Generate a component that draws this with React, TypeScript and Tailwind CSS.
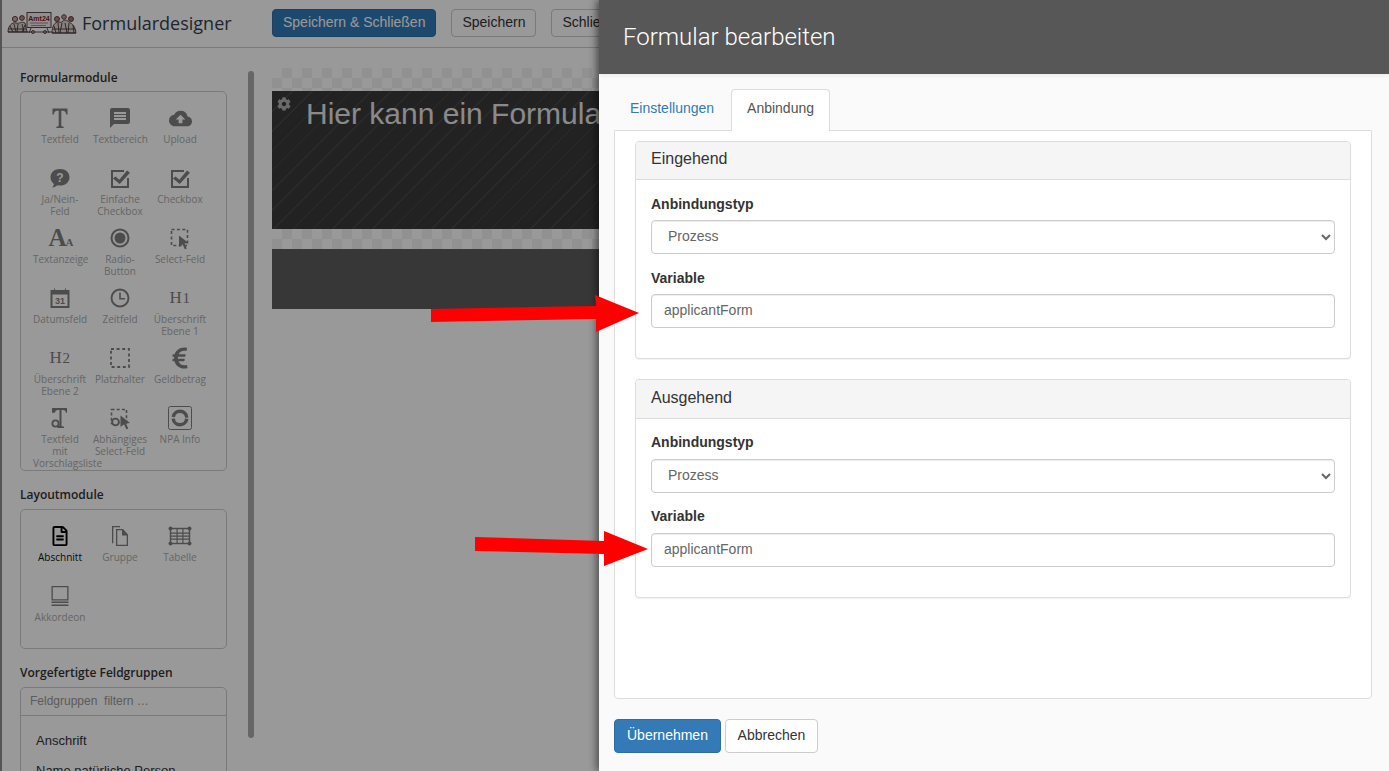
import React from "react";
import { FaEuroSign, FaCog, FaRegFileAlt } from "react-icons/fa";
import { MdMessage, MdCloudUpload } from "react-icons/md";

const sans = "font-['Liberation_Sans',Arial,sans-serif]";
const open = "font-['Open_Sans','Noto_Sans',sans-serif]";

function SvgI({ children, w = 24, h = 24, vb }: { children: React.ReactNode; w?: number; h?: number; vb?: string }) {
  return (
    <svg width={w} height={h} viewBox={vb ?? `0 0 ${w} ${h}`} fill="currentColor">
      {children}
    </svg>
  );
}

const BigT = () => (
  <SvgI>
    <path d="M4.500 2.500h15v6h-1.300c-.4-2.400-1.300-3.700-3.700-3.700h-1.200v14.200c0 1.300.6 1.600 2.400 1.700v1.300H8.300v-1.300c1.800-.1 2.400-.4 2.400-1.700V4.800H9.500c-2.400 0-3.300 1.300-3.700 3.700H4.500z" />
  </SvgI>
);
const QBubble = () => (
  <SvgI>
    <path d="M12 3c5.500 0 9.500 3.400 9.500 8.300S17.500 19.600 12 19.600c-.9 0-1.800-.1-2.600-.3-1.300 1.200-3 2-5.400 2.300 1-1 1.700-2.200 1.900-3.700C3.800 16.400 2.500 14 2.500 11.300 2.500 6.400 6.500 3 12 3z" />
    <text x="12" y="16" textAnchor="middle" fontSize="12" fontWeight="700" fill="#fff" fontFamily="Liberation Sans">?</text>
  </SvgI>
);
const Check = () => (
  <SvgI>
    <path d="M3 4h13v2H5v14h14v-8h2v10H3z" />
    <path d="M7.500 10.500l3.800 3.300L19 4.500l3 2.300-10.300 11.200L5 12.600z" />
  </SvgI>
);
const Aa = () => (
  <span className="flex items-end pl-[2px] font-['Liberation_Serif',serif] font-bold leading-none h-[22px]">
    <span className="text-[25px] leading-[22px]">A</span>
    <span className="text-[11px] leading-[14px] -ml-[1px]">A</span>
  </span>
);
const Radio = () => (
  <SvgI>
    <circle cx="12" cy="12" r="8.500" fill="none" stroke="currentColor" strokeWidth="2" />
    <circle cx="12" cy="12" r="5.500" />
  </SvgI>
);
const Cursor = ({ x, y, s = 1 }: { x: number; y: number; s?: number }) => (
  <path transform={`translate(${x} ${y}) scale(${s})`} d="M0 0l9.500 7.500-4 .4 2.300 5-2 .9-2.200-5.100L0 11.500z" />
);
const SelectI = () => (
  <SvgI>
    <rect x="3.500" y="3.500" width="16" height="16" fill="none" stroke="currentColor" strokeWidth="1.600" strokeDasharray="3 2.400" />
    <Cursor x={11} y={9.500} />
  </SvgI>
);
const DepI = () => (
  <SvgI>
    <rect x="3.500" y="3.500" width="15" height="14" fill="none" stroke="currentColor" strokeWidth="1.600" strokeDasharray="3 2.200" />
    <Cursor x={12.500} y={9.500} />
    <circle cx="7.500" cy="16" r="3.400" fill="#fff" stroke="currentColor" strokeWidth="1.900" />
  </SvgI>
);
const Cal = () => (
  <SvgI>
    <path fillRule="evenodd" d="M2.500 4H6V2.500h1V4h10V2.500h1V4h3.500v18h-19zM4.500 8.500V20h15V8.500z" />
    <text x="12" y="18.300" textAnchor="middle" fontSize="9" fontWeight="700" fontFamily="Liberation Sans">31</text>
  </SvgI>
);
const Clock = () => (
  <SvgI>
    <circle cx="12" cy="12" r="8.500" fill="none" stroke="currentColor" strokeWidth="1.900" />
    <path d="M11.200 6.500h1.600v5.500H17v1.600h-5.800z" />
  </SvgI>
);
const HN = ({ n }: { n: string }) => (
  <span className="font-['Liberation_Serif',serif] text-[17px] leading-[24px] tracking-[0.5px]">
    H<span className="text-[15px]">{n}</span>
  </span>
);
const Dashed = () => (
  <SvgI>
    <rect x="3" y="3" width="18" height="18" fill="none" stroke="currentColor" strokeWidth="1.800" strokeDasharray="3 2.600" />
  </SvgI>
);
const TSearch = () => (
  <SvgI>
    <path d="M4 2h15v4.800h-1.100c-.3-1.800-1-2.800-2.900-2.800h-1.500v15.400c0 .9.500 1.100 2.500 1.200V22H9.500v-1.800c1.200-.1 2-.3 2-1.200V4H10C8 4 7.300 5 7 6.800H4z" />
    <circle cx="7.500" cy="17.500" r="3.100" fill="#fff" stroke="currentColor" strokeWidth="1.800" />
  </SvgI>
);
const Npa = () => (
  <SvgI>
    <rect x="0.500" y="0.500" width="23" height="23" rx="2" fill="none" stroke="currentColor" strokeWidth="1" />
    <circle cx="12" cy="12" r="6.800" fill="none" stroke="currentColor" strokeWidth="3.400" strokeDasharray="19.800 1.560" strokeDashoffset="-0.800" />
  </SvgI>
);
const Copy = () => (
  <SvgI>
    <path fillRule="evenodd" d="M4 2h8v1.300H5.300v16H4zM8 5h7l5 5.500V22H8zm1.300 1.300v14.400h9.400V11.500H14V6.300z" />
  </SvgI>
);
const Table = () => (
  <SvgI>
    <rect x="2.500" y="4.500" width="19" height="15" fill="none" stroke="currentColor" strokeWidth="1.400" />
    <path d="M2 8.500h20v1.200H2zM2 11.500h20v1.200H2zM2 14.500h20v1.200H2zM8.500 4h1.200v16H8.500zM14.300 4h1.200v16h-1.200z" />
    <circle cx="2.500" cy="4.500" r="2" /><circle cx="21.500" cy="4.500" r="2" /><circle cx="2.500" cy="19.500" r="2" /><circle cx="21.500" cy="19.500" r="2" />
  </SvgI>
);
const Acc = () => (
  <SvgI>
    <path fillRule="evenodd" d="M3.500 2H20.500V16.500H3.500zM4.800 3.300V15.200H19.200V3.300z" />
    <path d="M3.500 17.500h17v1.500h-17zM3.500 20.500h17V22h-17z" />
  </SvgI>
);

type Tile = { label: string; icon: React.ReactNode; active?: boolean };

const formTiles: Tile[] = [
  { label: "Textfeld", icon: <BigT /> },
  { label: "Textbereich", icon: <MdMessage size={24} /> },
  { label: "Upload", icon: <MdCloudUpload size={23} /> },
  { label: "Ja/Nein-Feld", icon: <QBubble /> },
  { label: "Einfache Checkbox", icon: <Check /> },
  { label: "Checkbox", icon: <Check /> },
  { label: "Textanzeige", icon: <Aa /> },
  { label: "Radio-Button", icon: <Radio /> },
  { label: "Select-Feld", icon: <SelectI /> },
  { label: "Datumsfeld", icon: <Cal /> },
  { label: "Zeitfeld", icon: <Clock /> },
  { label: "Überschrift Ebene 1", icon: <HN n="1" /> },
  { label: "Überschrift Ebene 2", icon: <HN n="2" /> },
  { label: "Platzhalter", icon: <Dashed /> },
  { label: "Geldbetrag", icon: <FaEuroSign size={24} /> },
  { label: "Textfeld mit Vorschlagsliste", icon: <TSearch /> },
  { label: "Abhängiges Select-Feld", icon: <DepI /> },
  { label: "NPA Info", icon: <Npa /> },
];
const layoutTiles: Tile[] = [
  { label: "Abschnitt", icon: <FaRegFileAlt size={20} />, active: true },
  { label: "Gruppe", icon: <Copy /> },
  { label: "Tabelle", icon: <Table /> },
  { label: "Akkordeon", icon: <Acc /> },
];

function TileGrid({ tiles }: { tiles: Tile[] }) {
  return (
    <div className="grid grid-cols-[60px_60px_60px] auto-rows-[60px]">
      {tiles.map((t) => (
        <div key={t.label} className="flex flex-col items-center px-[3px] text-center">
          <div className={`flex h-[24px] items-center justify-center ${t.active ? "text-black" : "text-[#7f7f7f]"}`}>{t.icon}</div>
          <div className={`mt-[3px] w-full text-[10px] leading-[12px] ${t.active ? "text-[#111]" : "text-[#aaa]"}`}>{t.label}</div>
        </div>
      ))}
    </div>
  );
}

const Title = ({ children }: { children: React.ReactNode }) => (
  <div className="text-[12px] font-semibold leading-[16px] text-[#333]">{children}</div>
);

function Logo() {
  return (
    <svg width="70" height="24" viewBox="0 0 70 24" className="shrink-0">
      <g fill="none" stroke="#4a3434" strokeWidth="0.900">
        <circle cx="8" cy="8" r="2.600" fill="#d8a8a8" />
        <circle cx="15" cy="7" r="2.400" fill="#c98d8d" />
        <path d="M1 21c0-6 4-10 8-9s5-2 9 0l2 9z" fill="#dcd4d4" />
        <path d="M3 15l3 6M7 13l2 8M11 13l-1 8M15 13l2 8M18 14l-3 7M2 18h17M1 21h20" />
        <rect x="20" y="1.500" width="24" height="15" fill="#f0eded" />
        <path d="M23 12h18M24 14.500h15" stroke="#8a5a5a" strokeWidth=".7" />
        <path d="M24 17l-2 5M40 17l2 5M20 21h26" />
        <circle cx="26" cy="21" r="1.500" /><circle cx="38" cy="21" r="1.500" />
        <circle cx="50" cy="8" r="2.500" fill="#c07a7a" />
        <circle cx="57" cy="6" r="2.300" fill="#d09a9a" />
        <circle cx="64" cy="8" r="2.500" fill="#b87070" />
        <path d="M45 22c0-7 3-11 6-11s3 1 5-1 5 0 6 1 6 2 7 11z" fill="#ded6d6" />
        <path d="M47 15l2 7M51 12l1 10M55 12l-2 10M58 12l2 10M62 12l-1 10M66 14l1 8M46 18h22M45 22h24" />
      </g>
      <text x="32" y="9.500" textAnchor="middle" fontSize="7" fontWeight="700" fill="#7a2525" fontFamily="Liberation Sans">Amt24</text>
    </svg>
  );
}

const Btn = ({ children, className = "" }: { children: React.ReactNode; className?: string }) => (
  <button className={`h-[28px] rounded-[4px] border px-[10px] pb-[2px] text-[14px] leading-[20px] ${className}`}>{children}</button>
);

function Field({ label, gapCls, children }: { label: string; gapCls: string; children: React.ReactNode }) {
  return (
    <div>
      <div className={`text-[14px] font-bold leading-[20px] text-[#333] ${gapCls}`}>{label}</div>
      {children}
    </div>
  );
}

function Panel({ title, box, headerH, bodyCls, gapCls }: { title: string; box: string; headerH: string; bodyCls: string; gapCls: string }) {
  const control = "h-[34px] w-full rounded-[4px] border border-[#ccc] bg-white px-3 pb-[2px] text-[14px] leading-[20px] text-[#666] shadow-[inset_0_1px_1px_rgba(0,0,0,0.075)] outline-none";
  return (
    <div className={`overflow-hidden rounded-[4px] border border-[#ddd] bg-white shadow-[0_1px_1px_rgba(0,0,0,0.05)] ${box}`}>
      <div className={`flex items-center border-b border-[#ddd] bg-[#f5f5f5] px-[15px] pb-[3px] text-[16px] text-[#333] ${headerH}`}>{title}</div>
      <div className={`flex flex-col px-[15px] ${bodyCls}`}>
        <Field label="Anbindungstyp" gapCls={gapCls}>
          <select className={control} defaultValue="Prozess">
            <option>Prozess</option>
          </select>
        </Field>
        <Field label="Variable" gapCls={gapCls}>
          <input className={control} readOnly defaultValue="applicantForm" />
        </Field>
      </div>
    </div>
  );
}

const checker = "bg-[conic-gradient(#f2f2f2_25%,#fff_25%_50%,#f2f2f2_50%_75%,#fff_75%)] bg-[length:20px_20px]";

export default function App() {
  return (
    <div className={`relative h-[771px] w-[1389px] overflow-hidden border-l-2 border-[#555] bg-white ${sans}`}>
      {/* page behind the overlay */}
      <header className="flex h-[48px] items-center border-b border-[#ccc] pl-[5px] pb-[1px]">
        <Logo />
        <div className={`ml-[5px] -mt-[1px] w-[190px] text-[18px] leading-[24px] text-[#33404d] ${open}`}>Formulardesigner</div>
        <div className="flex gap-[15px]">
          <Btn className="border-[#2e6da4] bg-[#337ab7] text-white">Speichern &amp; Schließen</Btn>
          <Btn className="border-[#ccc] bg-white text-[#333]">Speichern</Btn>
          <Btn className="border-[#ccc] bg-white text-[#333]">Schließen</Btn>
        </div>
      </header>

      <div className="flex h-[723px]">
        <aside className={`h-full w-[270px] shrink-0 pl-[18px] pt-[22px] ${open}`}>
          <div className="flex">
            <div className="w-[207px]">
              <Title>Formularmodule</Title>
              <div className="mt-[5px] h-[380px] rounded-[5px] border border-[#ccc] pl-[9px] pt-[14px]">
                <TileGrid tiles={formTiles} />
              </div>
              <div className="mt-[16px]"><Title>Layoutmodule</Title></div>
              <div className="mt-[6px] h-[140px] rounded-[5px] border border-[#ccc] pl-[9px] pt-[14px]">
                <TileGrid tiles={layoutTiles} />
              </div>
              <div className="mt-[16px]"><Title>Vorgefertigte Feldgruppen</Title></div>
              <div className="mt-[6px] h-[120px] rounded-[5px] border border-[#ccc]">
                <div className={`flex h-[28px] items-center whitespace-pre border-b border-[#ccc] pb-[2px] pl-[9px] text-[12px] text-[#999] ${sans}`}>Feldgruppen  filtern …</div>
                <div className={`pl-[15px] pt-[15px] text-[13px] text-[#333] ${sans}`}>
                  <div className="leading-[20px]">Anschrift</div>
                  <div className="mt-[10px] leading-[20px]">Name natürliche Person</div>
                </div>
              </div>
            </div>
            <div className="ml-[21px] mt-[1px] h-[667px] w-[6px] rounded-[3px] bg-[#aaa]" />
          </div>
        </aside>

        <main className="min-w-0 flex-1 pt-[20px]">
          <div className={`h-[23px] ${checker}`} />
          <div className="relative h-[138px] bg-[repeating-linear-gradient(135deg,#484848_0,#484848_1px,#3a3a3a_1px,#3a3a3a_14px)] pl-[34px] pt-[3px]">
            <FaCog className="absolute left-[5px] top-[6px] text-white opacity-60" size={14} />
            <div className="whitespace-nowrap text-[30px] leading-[40px] text-[#e6e6e6]">Hier kann ein Formular erstellt werden</div>
          </div>
          <div className={`h-[20px] ${checker}`} />
          <div className="h-[60px] bg-[#5d5d5d]" />
        </main>
      </div>

      {/* dim overlay */}
      <div className="absolute inset-0 bg-black/40" />

      {/* slide-in dialog */}
      <div className="absolute bottom-0 left-[597px] right-0 top-0 flex flex-col bg-[#fafafa] shadow-[-3px_0_7px_rgba(0,0,0,0.45)]">
        <div className="flex h-[74px] shrink-0 items-center bg-[#575757] pl-[24px] font-['Roboto',sans-serif] text-[24px] font-light text-white shadow-[0_2px_4px_rgba(0,0,0,0.06)]">
          Formular bearbeiten
        </div>
        <div className="flex flex-1 flex-col pl-[15px] pr-[17px] pt-[15px]">
          <div className="relative z-10 flex h-[42px] items-start text-[14px] leading-[20px]">
            <div className="ml-[1px] px-[15px] py-[9px] text-[#337ab7]">Einstellungen</div>
            <div className="ml-[2px] h-[42px] rounded-t-[4px] border border-b-0 border-[#ddd] bg-white px-[15px] py-[8px] text-[#555]">Anbindung</div>
          </div>
          <div className="-mt-[1px] flex h-[569px] flex-col gap-[20px] rounded-b-[4px] border border-[#ddd] bg-white px-[20px] pt-[10px]">
            <Panel title="Eingehend" box="h-[218px]" headerH="h-[38px]" bodyCls="gap-[14px] pt-[14px]" gapCls="mb-[6px]" />
            <Panel title="Ausgehend" box="h-[219px]" headerH="h-[39px]" bodyCls="gap-[13px] pt-[13px]" gapCls="mb-[7px]" />
          </div>
          <div className="mt-[20px] flex gap-[4px]">
            <button className="h-[34px] rounded-[4px] border border-[#2e6da4] bg-[#337ab7] px-[12px] pb-[2px] text-[14px] text-white">Übernehmen</button>
            <button className="h-[34px] w-[93px] rounded-[4px] border border-[#ccc] bg-white pb-[2px] text-[14px] text-[#333]">Abbrechen</button>
          </div>
        </div>
      </div>

      {/* red annotation arrows */}
      <svg className="absolute left-[-2px] top-0" width="700" height="771" viewBox="0 0 700 771">
        <polygon fill="#ff0000" points="431,309 596,306 595,295 639,313 596,332 596,319 431,322" />
        <polygon fill="#ff0000" points="475,537 604,541 604,531 648,549 604,566 604,554 475,551" />
      </svg>
    </div>
  );
}
